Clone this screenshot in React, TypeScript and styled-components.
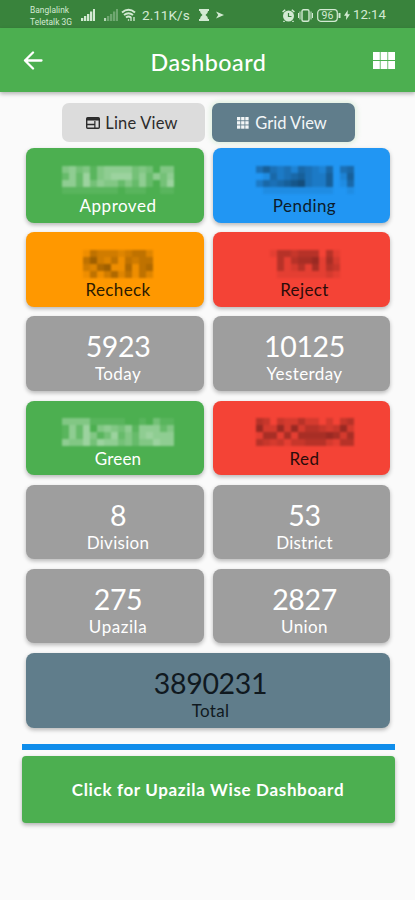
import React from "react";
import styled, { createGlobalStyle } from "styled-components";

const Global = createGlobalStyle`
  body { margin: 0; background: #fafafa; font-family: Lato, "Open Sans", sans-serif; }
  * { box-sizing: border-box; }
`;

const Screen = styled.div`
  width: 415px;
  height: 900px;
  display: flex;
  flex-direction: column;
  overflow: hidden;
  background: #fafafa;
`;

const StatusBar = styled.header`
  height: 28px;
  flex: none;
  display: flex;
  align-items: center;
  padding: 2px 30px 0 30px;
  background: #39833c;
  color: #d3ead3;
  font-family: Roboto, sans-serif;
`;

const Carriers = styled.div`
  width: 51px;
  padding-top: 1px;
  font-size: 8.4px;
  line-height: 12px;
  letter-spacing: 0.05px;
  white-space: nowrap;
`;

const StatusText = styled.span<{ $width: number; $size: number }>`
  width: ${(p) => p.$width}px;
  font-size: ${(p) => p.$size}px;
  line-height: 16px;
  white-space: nowrap;
`;

const StatusIcon = styled.svg<{ $gap: number }>`
  flex: none;
  display: block;
  margin-right: ${(p) => p.$gap}px;
`;

const Spacer = styled.div`
  flex: 1;
`;

const AppBar = styled.div`
  height: 64px;
  flex: none;
  display: flex;
  align-items: center;
  justify-content: space-between;
  padding: 0 19px 0 21px;
  background: #4caf50;
  box-shadow: 0 2px 4px rgba(0, 0, 0, 0.28);
  color: #fff;
`;

const Title = styled.h1`
  margin: 3px 0 0;
  font-size: 23.3px;
  line-height: 28px;
  font-weight: 500;
  letter-spacing: 0.5px;
`;

const IconButton = styled.button`
  width: 24px;
  height: 24px;
  padding: 0;
  border: 0;
  background: none;
  color: inherit;
  display: flex;
  align-items: center;
  justify-content: center;
`;

const Switcher = styled.div`
  display: flex;
  justify-content: center;
  gap: 7px;
  margin-top: 11px;
  padding-left: 2px;
`;

const ViewButton = styled.button<{ $active?: boolean }>`
  width: 143px;
  height: 39px;
  padding: 1px 3px 0 0;
  border: 0;
  border-radius: 7px;
  display: flex;
  align-items: center;
  justify-content: center;
  gap: ${(p) => (p.$active ? 6 : 5)}px;
  background: ${(p) => (p.$active ? "#607d8b" : "#dcdcdc")};
  color: ${(p) => (p.$active ? "#f2f6f7" : "#2c2c2c")};
  box-shadow: ${(p) => (p.$active ? "0 0 5px 2px rgba(120, 200, 120, 0.2)" : "none")};
  font-family: inherit;
  font-size: 16.5px;
  letter-spacing: ${(p) => (p.$active ? 0 : 0.2)}px;
`;

const Grid = styled.main`
  display: grid;
  grid-template-columns: 177.5px 177.5px;
  grid-auto-rows: 74.5px;
  gap: 9.7px 9px;
  margin: 6px 0 0 26px;
`;

const Card = styled.section<{ $bg: string; $fg: string; $wide?: boolean }>`
  grid-column: ${(p) => (p.$wide ? "span 2" : "auto")};
  width: ${(p) => (p.$wide ? "364px" : "auto")};
  padding: 13px 0 0 ${(p) => (p.$wide ? 5 : 6.5)}px;
  display: flex;
  flex-direction: column;
  align-items: center;
  border-radius: 8px;
  background: ${(p) => p.$bg};
  color: ${(p) => p.$fg};
  box-shadow: 0 2px 4px rgba(0, 0, 0, 0.27);
`;

const Value = styled.div`
  height: 35px;
  display: flex;
  align-items: center;
  font-size: 28.5px;
  line-height: 35px;
  letter-spacing: -0.35px;
`;

const Label = styled.div<{ $spacing: number }>`
  font-size: 17px;
  line-height: 20px;
  letter-spacing: ${(p) => p.$spacing}px;
`;

const Censored = styled.svg`
  display: block;
  margin-top: 2px;
  filter: blur(0.8px);
`;

const Divider = styled.div`
  height: 6px;
  flex: none;
  margin: 16.5px 20.5px 5.5px 21.5px;
  background: #0f8deb;
`;

const Action = styled.button`
  height: 67px;
  flex: none;
  margin: 0 20.5px 0 21.5px;
  padding: 0;
  border: 0;
  border-radius: 4px;
  background: #4caf50;
  color: #fff;
  box-shadow: 0 2px 4px rgba(0, 0, 0, 0.3);
  font-family: inherit;
  font-size: 17px;
  font-weight: 700;
  letter-spacing: 0.65px;
`;

/* Every row is a string of shade levels, 0 (clear) to 9 (strongest). */
function Mosaic({ rows }: { rows: string[] }) {
  const cell = 7;
  return (
    <Censored width={rows[0].length * cell} height={28} viewBox={`0 0 ${rows[0].length * cell} 28`}>
      {rows.map((row, y) =>
        row.split("").map((level, x) => (
          <rect
            key={`${x}-${y}`}
            x={x * cell}
            y={y * cell}
            width={cell}
            height={cell}
            fill="currentColor"
            opacity={Number(level) * 0.075}
          />
        ))
      )}
    </Censored>
  );
}

type Stat = {
  label: string;
  bg: string;
  fg?: string;
  value?: string;
  mosaic?: string[];
  spacing?: number;
  wide?: boolean;
};

const GREEN = "#4caf50";
const GREY = "#9e9e9e";
const RED = "#f44336";

const stats: Stat[] = [
  { label: "Approved", bg: GREEN, spacing: 0.5, mosaic: ["4534145555343044", "2526145666352535", "5526354424252036", "1111111101110011"] },
  { label: "Pending", bg: "#2196f3", fg: "#0c1c2c", spacing: 0.45, mosaic: ["46434254325045", "01534564336026", "35456784336015", "01111111111001"] },
  { label: "Recheck", bg: "#ff9800", fg: "#2b1a00", spacing: 0.4, mosaic: ["1433323442", "4632414344", "3256115145", "1413524142"] },
  { label: "Reject", bg: RED, fg: "#2b0c0a", spacing: 0.4, mosaic: ["1443444041", "0414556152", "0412415143", "0111111121"] },
  { label: "Today", bg: GREY, value: "5923", spacing: 0.4 },
  { label: "Yesterday", bg: GREY, value: "10125", spacing: 0.4 },
  { label: "Green", bg: GREEN, spacing: 0.2, mosaic: ["4444111110010311", "1526045435155524", "1526413624256555", "5446365534244655"] },
  { label: "Red", bg: RED, fg: "#2b0c0a", spacing: 0.5, mosaic: ["43032242202034", "62262624432362", "15515155556525", "43231334442144"] },
  { label: "Division", bg: GREY, value: "8", spacing: 0.3 },
  { label: "District", bg: GREY, value: "53", spacing: 0.2 },
  { label: "Upazila", bg: GREY, value: "275", spacing: 0.55 },
  { label: "Union", bg: GREY, value: "2827", spacing: 0.4 },
  { label: "Total", bg: "#607d8b", fg: "#10191f", value: "3890231", spacing: 0.3, wide: true },
];

function Signal({ faded }: { faded?: boolean }) {
  return (
    <StatusIcon $gap={faded ? 3 : 9} width="14" height="12" viewBox="0 0 14 12" fill="currentColor">
      <g opacity={faded ? 0.35 : 1}>
        <rect x="0" y="9" width="2.300" height="3" />
        <rect x="3" y="7" width="2.300" height="5" />
        <rect x="6" y="5" width="2.300" height="7" />
        <rect x="9" y="2.500" width="2.300" height="9.500" />
        <rect x="12" y="0" width="2" height="12" />
      </g>
      {faded && <rect x="0" y="9" width="2" height="3" opacity="0.7" />}
    </StatusIcon>
  );
}

export default function App() {
  return (
    <Screen>
      <Global />
      <StatusBar>
        <Carriers>
          Banglalink
          <br />
          Teletalk 3G
        </Carriers>
        <Signal />
        <Signal faded />
        <StatusIcon $gap={6} width="15" height="14" viewBox="0 0 15 14" fill="none" stroke="currentColor" strokeWidth="1.900">
          <path d="M1 4.500Q7.500-1 14 4.500M3 7Q7.500 3.500 12 7M5 9.500Q7.500 7.500 10 9.500" />
          <path d="M7 12.500l1-1M10 9v4M13 9v4" strokeWidth="1.300" />
        </StatusIcon>
        <StatusText $width={57} $size={13.6}>2.11K/s</StatusText>
        <StatusIcon $gap={7} width="10" height="12" viewBox="0 0 10 12" fill="currentColor">
          <path d="M0 0h10v2H9Q9 4.500 6.500 6Q9 7.500 9 10h1v2H0v-2h1Q1 7.500 3.500 6Q1 4.500 1 2H0z" />
        </StatusIcon>
        <StatusIcon $gap={0} width="8" height="8" viewBox="0 0 9 8" fill="currentColor">
          <path d="M0 0l9 4-9 4 2.500-4z" />
        </StatusIcon>
        <Spacer />
        <StatusIcon $gap={3} width="13" height="13" viewBox="0 0 13 13">
          <circle cx="6.500" cy="7" r="5.500" fill="currentColor" />
          <path d="M.6 3l2.600-2.300M12.400 3L9.800.7M2.500 12l-1 1M10.500 12l1 1" stroke="currentColor" strokeWidth="1.500" />
          <path d="M6.500 4v3.500h3" fill="none" stroke="#39833c" strokeWidth="1.200" />
        </StatusIcon>
        <StatusIcon $gap={4} width="15" height="13" viewBox="0 0 15 13" fill="none" stroke="currentColor" strokeWidth="1.400">
          <rect x="4" y=".8" width="7" height="11.400" rx="1.500" />
          <path d="M2 2.500v8M13 2.500v8M.5 4v5M14.500 4v5" strokeWidth="1" />
        </StatusIcon>
        <StatusIcon $gap={3} width="24" height="13" viewBox="0 0 24 13" fill="none" stroke="currentColor" strokeWidth="1.200">
          <rect x=".7" y=".7" width="19.600" height="11.600" rx="3" />
          <path d="M22.500 4v5" strokeWidth="2" />
          <text x="10.500" y="10.200" textAnchor="middle" fontSize="10.500" fill="currentColor" stroke="none">96</text>
        </StatusIcon>
        <StatusIcon $gap={3} width="6" height="10" viewBox="0 0 6 10" fill="currentColor">
          <path d="M3.800 0L0 5.700h2.300L2 10l4-5.700H3.600z" />
        </StatusIcon>
        <StatusText $width={32} $size={13.2}>12:14</StatusText>
      </StatusBar>

      <AppBar>
        <IconButton aria-label="Back">
          <svg width="20" height="20" viewBox="0 0 20 20" fill="none" stroke="currentColor" strokeWidth="2.300" strokeLinecap="round" strokeLinejoin="round">
            <path d="M18.500 10.500H2M10 2.500l-8 8 8 8" />
          </svg>
        </IconButton>
        <Title>Dashboard</Title>
        <IconButton aria-label="Grid">
          <svg width="22" height="17" viewBox="0 0 22 17" fill="currentColor">
            {[0, 7.6, 15.2].map((x) =>
              [0, 9].map((y) => <rect key={`${x}-${y}`} x={x} y={y} width="6.800" height="8" />)
            )}
          </svg>
        </IconButton>
      </AppBar>

      <Switcher>
        <ViewButton>
          <svg width="14" height="12" viewBox="0 0 15 12" fill="none" stroke="currentColor" preserveAspectRatio="none">
            <rect x=".75" y=".75" width="13.500" height="10.500" rx="1" strokeWidth="1.500" />
            <path d="M1 2.300h13" strokeWidth="2.500" />
            <path d="M9.500 4v7M1 7.500h8.500" strokeWidth="1.300" />
          </svg>
          Line View
        </ViewButton>
        <ViewButton $active>
          <svg width="12" height="12" viewBox="0 0 13 12" fill="currentColor" preserveAspectRatio="none">
            {[0, 4.5, 9].map((x) =>
              [0, 4.2, 8.4].map((y) => <rect key={`${x}-${y}`} x={x} y={y} width="3.600" height="3.300" />)
            )}
          </svg>
          Grid View
        </ViewButton>
      </Switcher>

      <Grid>
        {stats.map((s) => (
          <Card key={s.label} $bg={s.bg} $fg={s.fg ?? "#fff"} $wide={s.wide}>
            <Value>{s.mosaic ? <Mosaic rows={s.mosaic} /> : s.value}</Value>
            <Label $spacing={s.spacing ?? 0}>{s.label}</Label>
          </Card>
        ))}
      </Grid>

      <Divider />
      <Action>Click for Upazila Wise Dashboard</Action>
    </Screen>
  );
}
